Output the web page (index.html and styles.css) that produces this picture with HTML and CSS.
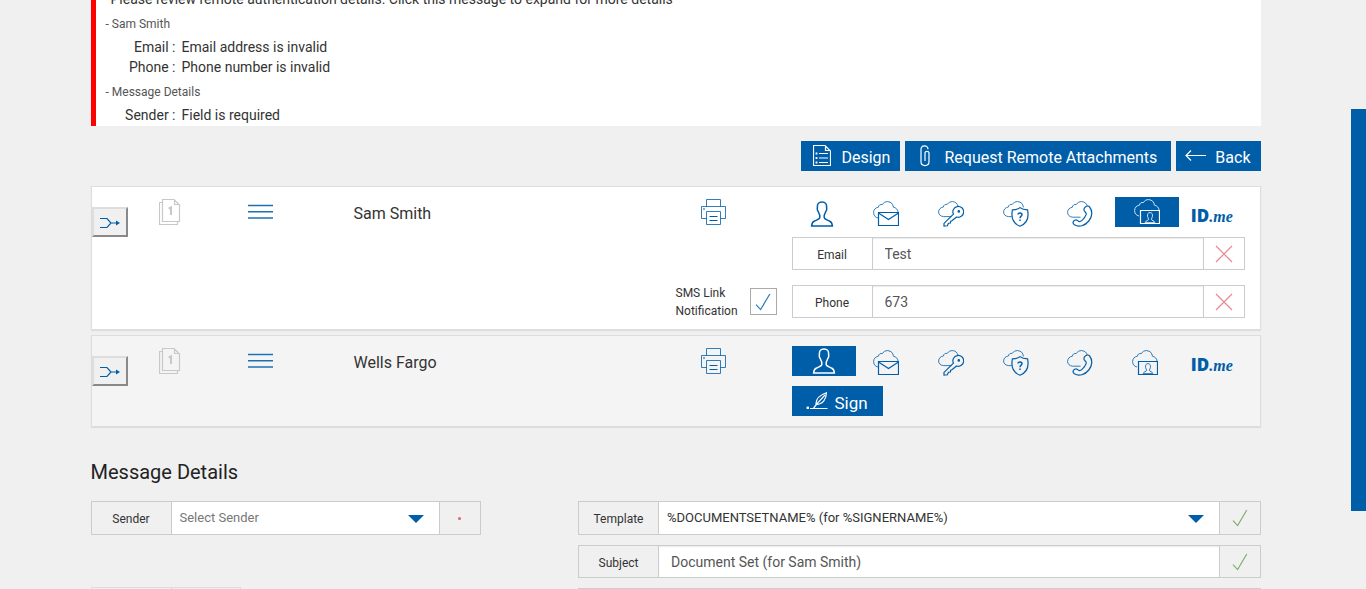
FILE: index.html
```html
<!DOCTYPE html>
<html lang="en">
<head>
    <meta charset="UTF-8">
    <meta name="viewport" content="width=device-width, initial-scale=1.0">
    <title>Remote Authentication</title>
    <link rel="stylesheet" href="styles.css">
</head>
<body>
    <!-- Shared icons -->
    <svg class="sprite" aria-hidden="true">
        <symbol id="i-user" viewBox="0 0 26 26">
            <path class="medium" d="M13 1C9.5 1 8.2 3 8.4 6C8.4 7 8.1 7.3 8.4 8.8C8.6 10 9 10 9.5 11.2C9.9 13 10.8 13.4 10.8 14.5V16.6C10.8 18.2 8 18.8 5.6 20C3.2 21 2.8 22 2.6 25H23.4C23.2 22 22.8 21 20.4 20C18 18.8 15.2 18.2 15.2 16.6V14.5C15.2 13.4 16.1 13 16.5 11.2C17 10 17.4 10 17.6 8.8C17.9 7.3 17.6 7 17.6 6C17.8 3 16.5 1 13 1Z"/>
        </symbol>
        <symbol id="i-mail" viewBox="0 0 26 26">
            <path class="thin" d="M5 17C2.2 16.4 .6 14.4 .6 11.6C.6 8.6 2.6 6.6 5.4 6.2C5.6 4.2 7.4 3 9.4 3.6C10.6 1.4 12.4 .6 14.6 .6C18.2 .8 20.2 3.2 20.4 6.2C23 6.8 24.8 8.4 25 11"/>
            <path d="M5.5 11.5H25.5V24.5H5.5ZM5.5 12L15.5 18.5L25.5 12"/>
        </symbol>
        <symbol id="i-key" viewBox="0 0 26 26">
            <path class="thin" d="M13.4 15.6H5.6C2.6 15.4 .6 13.6 .6 11C.6 8.2 2.6 6.4 5.4 6C5.6 4 7.4 3 9.2 3.4C10.6 1.4 12.4 .6 14.6 .6C17.6 .8 19.4 2.6 20 5.4"/>
            <path d="M15.4 13.2A5.4 5.4 0 1 1 18.6 16L13.6 20L12.6 20.2L12.4 22L10.4 22.2L9.4 24.8L6 25.2V22.4Z"/>
            <circle cx="20.8" cy="10.4" r=".7"/>
        </symbol>
        <symbol id="i-shield" viewBox="0 0 26 26">
            <path class="thin" d="M8.6 15.6H5.6C2.6 15.4 .6 13.6 .6 11C.6 8.2 2.6 6.4 5.4 6C5.6 4 7.4 3 9.2 3.4C10.6 1.4 12.4 .6 14.6 .6C18 .8 20 2.8 20.4 6.4"/>
            <path d="M17 6.6C14.8 8.4 12.2 8.8 9.4 8.8C8 16 9.6 22.4 17 25.2C24.4 22.4 26 16 24.6 8.8C21.8 8.8 19.2 8.4 17 6.6Z"/>
            <path class="medium" d="M15 13.4C15 11.4 19 11.4 19 13.6C19 15.2 17 15 17 17.2M17 18.6V20"/>
        </symbol>
        <symbol id="i-phone" viewBox="0 0 26 26">
            <path class="thin" d="M13.6 16.2H5.6C2.6 16 .6 14 .6 11.4C.6 8.6 2.6 6.6 5.4 6.2C5.6 4.2 7.4 3 9.2 3.6C10.6 1.4 12.4 .6 14.6 .6C17.8 .8 19.8 2.6 20.2 5"/>
            <path d="M18.6 5.8C20 4.6 21.6 4.8 22.6 6C25.8 10 25.4 15.6 21.8 20C18 24.8 12 26.6 7.4 23.8C6 22.8 5.8 21.4 6.6 20.2C7.6 19 9.4 18.6 10.4 19.4C11.4 20.6 13 21 14.8 19.6C16.8 18 18.4 15.8 19.2 13.4C19.8 11.4 17.4 11 17 9.2C16.8 7.8 17.4 6.6 18.6 5.8Z"/>
        </symbol>
        <symbol id="i-remote" viewBox="0 0 26 26">
            <path class="thin" d="M5 17C2.2 16.4 .6 14.4 .6 11.6C.6 8.6 2.6 6.6 5.4 6.2C5.6 4.2 7.4 3 9.4 3.6C10.6 1.4 12.4 .6 14.6 .6C18.2 .8 20.2 3.2 20.4 6.2C23 6.8 24.8 8.4 25 11"/>
            <path d="M6.5 11.5H25.5V24.5H6.5Z"/>
            <path class="thin" d="M11.2 23.6C11.4 21.4 14.6 21.8 14.6 20.2L13.6 17.6C13.2 15 14 13.6 16 13.6S18.8 15 18.4 17.6L17.4 20.2C17.4 21.8 20.6 21.4 20.8 23.6Z"/>
        </symbol>
        <symbol id="i-printer" viewBox="0 0 26 26">
            <path class="thin" d="M5.5 7.5V.5H19.5V7.5M5.5 19.5H.5V7.5H24.5V19.5H19.5M5.5 12.5H19.5V25.5H5.5Z"/>
            <path d="M2 10H4M8.5 17.5H16.5M8.5 21.5H16.5"/>
        </symbol>
        <symbol id="i-docs" viewBox="0 0 22 26">
            <path d="M3.5 3.5H.5V25.5H18.5V22.5M3.5 .5H15L20.5 6V22.5H3.5ZM15.5 .5V5.5H20.5"/>
            <path class="bold" d="M9.6 9.6L12 8.4V16"/>
        </symbol>
        <symbol id="i-merge" viewBox="0 0 22 14">
            <path d="M1 2.5H8L12 7L8 11.5H1M12 7H18"/>
            <path class="solid" d="M17 4.5L21 7L17 9.5Z"/>
        </symbol>
        <symbol id="i-menu" viewBox="0 0 26 16">
            <path class="medium" d="M0 1.6H25M0 7.8H25M0 14H25"/>
        </symbol>
        <symbol id="i-check" viewBox="0 0 16 18">
            <path d="M1 11.6L5.6 16.6L14.8 1"/>
        </symbol>
        <symbol id="i-cross" viewBox="0 0 18 18">
            <path d="M1 1L17 17M17 1L1 17"/>
        </symbol>
        <symbol id="i-design" viewBox="0 0 18 22">
            <path d="M.5 .5H12L17.5 6V20.5H.5ZM12.5 .5V5.5H17.5M6 8.5H15M6 13H15M6 17.5H15"/>
            <path class="bold" d="M2.6 8.5H4.4M2.6 13H4.4M2.6 17.5H4.4"/>
        </symbol>
        <symbol id="i-clip" viewBox="0 0 10 22">
            <path d="M1 7V16.6C1 22 9 22 9 16.6V8C9 5.8 5 5.8 5 8V16M1 7V4.6C1 -.4 8 -.4 8 4.2"/>
        </symbol>
        <symbol id="i-back" viewBox="0 0 22 12">
            <path d="M21 5.5H1M6 .5L1 5.5L6 10.5"/>
        </symbol>
        <symbol id="i-sign" viewBox="0 0 22 18">
            <path d="M4 16.5H21.5M7.6 16L12 10.6L19 3M10 12.6C9.6 7 14 3 20.4 .8C20.4 7 17 12.4 10 12.6"/>
            <path class="solid" d="M.6 14.6H3V17H.6Z"/>
        </symbol>
    </svg>

    <main class="page">
        <div class="container">
            <section class="alert" role="alert">
                <p class="alert-title">Please review remote authentication details. Click this message to expand for more details</p>
                <p class="alert-group">- Sam Smith</p>
                <dl>
                    <dt>Email :</dt><dd>Email address is invalid</dd>
                    <dt>Phone :</dt><dd>Phone number is invalid</dd>
                </dl>
                <p class="alert-group">- Message Details</p>
                <dl>
                    <dt>Sender :</dt><dd>Field is required</dd>
                </dl>
            </section>

            <div class="toolbar">
                <button type="button" class="btn"><svg class="icon-design"><use href="#i-design"/></svg>Design</button>
                <button type="button" class="btn btn-attach"><svg class="icon-clip"><use href="#i-clip"/></svg>Request Remote Attachments</button>
                <button type="button" class="btn btn-back"><svg class="icon-back"><use href="#i-back"/></svg>Back</button>
            </div>

            <section class="signer">
                <button type="button" class="merge" aria-label="Merge"><svg><use href="#i-merge"/></svg></button>
                <svg class="docs"><use href="#i-docs"/></svg>
                <svg class="menu"><use href="#i-menu"/></svg>
                <h3>Sam Smith</h3>
                <svg class="printer"><use href="#i-printer"/></svg>
                <div class="auth">
                    <div class="tabs">
                        <button type="button" aria-label="In person"><svg><use href="#i-user"/></svg></button>
                        <button type="button" aria-label="Email"><svg><use href="#i-mail"/></svg></button>
                        <button type="button" aria-label="Access code"><svg><use href="#i-key"/></svg></button>
                        <button type="button" aria-label="Questions"><svg><use href="#i-shield"/></svg></button>
                        <button type="button" aria-label="Phone"><svg><use href="#i-phone"/></svg></button>
                        <button type="button" class="active" aria-label="Remote"><svg><use href="#i-remote"/></svg></button>
                        <button type="button" class="idme"><b>ID</b><i>.me</i></button>
                    </div>
                    <div class="field">
                        <label for="email">Email</label>
                        <input type="text" id="email" value="Test">
                        <span class="status invalid"><svg><use href="#i-cross"/></svg></span>
                    </div>
                </div>
                <div class="sms">
                    <label for="sms">SMS Link Notification</label>
                    <span class="checkbox">
                        <input type="checkbox" id="sms" checked>
                        <svg><use href="#i-check"/></svg>
                    </span>
                </div>
                <div class="field phone">
                    <label for="phone">Phone</label>
                    <input type="text" id="phone" value="673">
                    <span class="status invalid"><svg><use href="#i-cross"/></svg></span>
                </div>
            </section>

            <section class="signer signer-alt">
                <button type="button" class="merge" aria-label="Merge"><svg><use href="#i-merge"/></svg></button>
                <svg class="docs"><use href="#i-docs"/></svg>
                <svg class="menu"><use href="#i-menu"/></svg>
                <h3>Wells Fargo</h3>
                <svg class="printer"><use href="#i-printer"/></svg>
                <div class="auth">
                    <div class="tabs">
                        <button type="button" class="active" aria-label="In person"><svg><use href="#i-user"/></svg></button>
                        <button type="button" aria-label="Email"><svg><use href="#i-mail"/></svg></button>
                        <button type="button" aria-label="Access code"><svg><use href="#i-key"/></svg></button>
                        <button type="button" aria-label="Questions"><svg><use href="#i-shield"/></svg></button>
                        <button type="button" aria-label="Phone"><svg><use href="#i-phone"/></svg></button>
                        <button type="button" aria-label="Remote"><svg><use href="#i-remote"/></svg></button>
                        <button type="button" class="idme"><b>ID</b><i>.me</i></button>
                    </div>
                    <button type="button" class="btn btn-sign"><svg class="icon-sign"><use href="#i-sign"/></svg>Sign</button>
                </div>
            </section>

            <h2>Message Details</h2>
            <form class="details">
                <div class="details-left">
                    <div class="field field-select">
                        <label for="sender">Sender</label>
                        <span class="select">
                            <select id="sender" class="empty"><option>Select Sender</option></select>
                        </span>
                        <span class="status required"></span>
                    </div>
                    <div class="field field-small">
                        <span class="field-name"></span>
                        <input type="text" aria-label="Expiration">
                    </div>
                </div>
                <div class="details-right">
                    <div class="field field-select">
                        <label for="template">Template</label>
                        <span class="select">
                            <select id="template"><option>%DOCUMENTSETNAME% (for %SIGNERNAME%)</option></select>
                        </span>
                        <span class="status valid"><svg><use href="#i-check"/></svg></span>
                    </div>
                    <div class="field">
                        <label for="subject">Subject</label>
                        <input type="text" id="subject" value="Document Set (for Sam Smith)">
                        <span class="status valid"><svg><use href="#i-check"/></svg></span>
                    </div>
                    <div class="field">
                        <span class="field-name"></span>
                        <textarea aria-label="Message"></textarea>
                    </div>
                </div>
            </form>
        </div>
    </main>
    <div class="scrollbar"></div>
</body>
</html>
```
FILE: styles.css
```css
/* Reset & Global Styles */
* {
    margin: 0;
    padding: 0;
    box-sizing: border-box;
}
body {
    display: flex;
    height: 100vh;
    overflow: hidden;
    background: #f0f0f0;
    color: #333;
    font-family: Roboto, "Liberation Sans", sans-serif;
    font-size: 14px;
    line-height: 20px;
}
button, input, select, textarea {
    font: inherit;
    color: inherit;
    border-radius: 0;
}
svg {
    display: block;
    fill: none;
    stroke: currentColor;
    stroke-width: 1.2;
}
.sprite {
    position: absolute;
    width: 0;
    height: 0;
}
.thin {
    stroke-width: 0.8;
}
.medium {
    stroke-width: 1.5;
}
.bold {
    stroke-width: 2;
}
.solid {
    fill: currentColor;
    stroke: none;
}
.page {
    flex: 1;
    min-width: 0;
}
.container {
    max-width: 1170px;
    margin: 0 auto;
}

/* Scrollbar */
.scrollbar {
    width: 15px;
    margin: 109px 0 78px;
    background: #005da8;
}

/* Alert */
.alert {
    margin-top: -11px;
    padding: 0 10px 1px;
    border-left: 5px solid #f00;
    background: #fff;
}
.alert-title {
    padding-left: 5px;
}
.alert-group {
    margin: 5px 0 3px;
    font-size: 12px;
    color: #555;
}
.alert dl {
    display: grid;
    grid-template-columns: 70px 1fr;
    column-gap: 6px;
}
.alert dt {
    text-align: right;
}

/* Buttons */
.toolbar {
    display: flex;
    justify-content: flex-end;
    gap: 5px;
    margin: 15px 0;
}
.btn {
    display: flex;
    align-items: center;
    height: 30px;
    padding: 4px 10px 0 12px;
    border: none;
    background: #005da8;
    color: #fff;
    font-size: 16px;
    cursor: pointer;
}
.btn svg {
    margin-bottom: 4px;
}
.icon-design {
    width: 18px;
    height: 22px;
    margin-right: 10px;
}
.icon-clip {
    width: 10px;
    height: 22px;
    margin-right: 14px;
}
.btn-attach {
    padding: 4px 14px 0 15px;
}
.icon-back {
    width: 22px;
    height: 12px;
    margin-right: 8px;
}
.btn-back {
    padding-left: 9px;
}
.icon-sign {
    width: 22px;
    height: 18px;
    margin-right: 7px;
}
.btn-sign {
    padding: 4px 15px 0 14px;
    font-size: 17px;
}

/* Signers */
.signer {
    display: grid;
    grid-template-columns: 67px 89px 106px 1fr 91px 453px;
    align-items: start;
    row-gap: 15px;
    margin-bottom: 5px;
    padding: 10px 15px 11px 0;
    border: 1px solid #ddd;
    background: #fff;
    box-shadow: 0 1px 1px rgba(0, 0, 0, 0.08);
}
.signer-alt {
    padding-bottom: 10px;
    background: #f4f4f4;
}
.merge {
    width: 36px;
    height: 30px;
    margin-top: 10px;
    padding: 2px 5px 0;
    border: 2px outset #ddd;
    background: #f0f0f0;
    color: #005da8;
}
.merge svg {
    width: 22px;
    height: 14px;
}
.docs {
    width: 22px;
    height: 26px;
    margin-top: 2px;
    color: #c8c8c8;
}
.menu {
    width: 26px;
    height: 16px;
    margin-top: 7px;
    color: #1c71b5;
}
.signer h3 {
    margin-top: 7px;
    font-size: 16px;
    font-weight: 400;
}
.printer {
    width: 26px;
    height: 26px;
    margin-top: 2px;
    color: #005da8;
}
.tabs {
    display: grid;
    grid-template-columns: repeat(7, 1fr);
    margin-bottom: 10px;
}
.tabs button {
    width: 64px;
    height: 30px;
    padding: 4px 0 0 17px;
    border: none;
    background: none;
    color: #005da8;
    cursor: pointer;
}
.tabs svg {
    width: 26px;
    height: 26px;
}
.tabs .active {
    padding: 0 19px 0 19px;
    background: #005da8;
    color: #fff;
}
.tabs .idme {
    display: flex;
    align-items: baseline;
    padding: 9px 0 0 11px;
}
.idme b {
    font-family: "Open Sans", sans-serif;
    font-size: 17px;
    font-weight: 800;
}
.idme i {
    font-family: "Liberation Serif", serif;
    font-size: 16px;
    font-weight: 700;
}

/* Fields */
.field {
    display: flex;
    height: 33px;
    border: 1px solid #ccc;
}
.field label,
.field-name {
    flex: 0 0 80px;
    border-right: 1px solid #ccc;
    font-size: 12px;
    line-height: 34px;
    text-align: center;
}
.field input,
.field textarea {
    flex: 1;
    min-width: 0;
    padding: 0 12px;
    border: none;
    background: #fff;
    color: #555;
    box-shadow: inset 0 1px 1px rgba(0, 0, 0, 0.08);
}
.status {
    display: grid;
    flex: 0 0 41px;
    place-items: center;
    border-left: 1px solid #ccc;
}
.invalid {
    color: #e58a92;
}
.invalid svg {
    width: 18px;
    height: 18px;
}
.valid {
    color: #7fae6c;
}
.valid svg,
.checkbox svg {
    width: 16px;
    height: 18px;
}
.required::before {
    content: "";
    width: 3px;
    height: 3px;
    border-radius: 50%;
    background: #d9666b;
}
.phone {
    grid-column: 6;
}
.sms {
    display: flex;
    grid-column: 4 / 6;
    justify-content: flex-end;
    align-items: center;
    gap: 10px;
    height: 33px;
    padding-right: 15px;
}
.sms label {
    width: 64px;
    font-size: 12px;
    line-height: 18px;
}
.checkbox {
    display: grid;
    place-items: center;
    color: #2a7cc0;
}
.checkbox input,
.checkbox svg {
    grid-area: 1 / 1;
}
.checkbox input {
    appearance: none;
    width: 27px;
    height: 27px;
    border: 1px solid #aaa;
}
.checkbox svg {
    pointer-events: none;
}

/* Message details */
h2 {
    margin-top: 35px;
    color: #222;
    font-size: 20px;
    font-weight: 400;
}
.details {
    display: grid;
    grid-template-columns: repeat(12, 1fr);
    margin-top: 19px;
}
.details-left {
    grid-column: span 4;
}
.details-right {
    display: grid;
    grid-column: 6 / 13;
    gap: 10px;
}
.field-select {
    height: 34px;
}
.select {
    position: relative;
    flex: 1;
}
.select select {
    appearance: none;
    width: 100%;
    height: 100%;
    padding: 0 30px 0 8px;
    border: none;
    background: #fff;
    font-size: 13px;
}
.select .empty {
    color: #777;
}
.select::after {
    content: "";
    position: absolute;
    top: 13px;
    right: 15px;
    border: 8px solid transparent;
    border-top-color: #005da8;
    border-bottom: none;
    pointer-events: none;
}
.field-small {
    width: 150px;
    margin-top: 52px;
    border-color: #ddd;
}
```
